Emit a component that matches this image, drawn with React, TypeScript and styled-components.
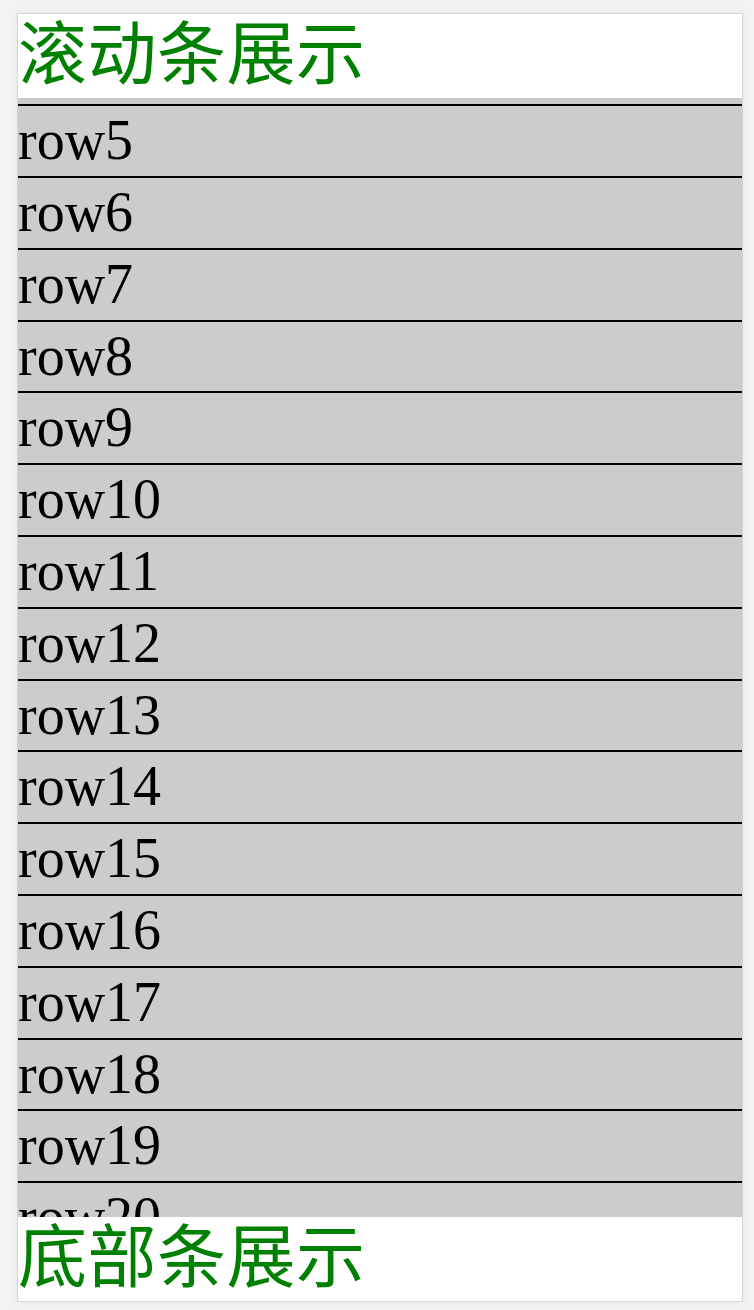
import { FC, useEffect, useRef } from 'react'

import styled, { createGlobalStyle } from 'styled-components'

const GlobalStyle = createGlobalStyle`
  html, body {
    margin: 0;
    padding: 0;
    background: #f3f3f3;
  }
  body {
    font-family: "Liberation Serif", "Noto Sans CJK SC", serif;
  }
`

const Page = styled.div`
  box-sizing: border-box;
  height: 1310px;
  padding: 13px 11px 8px 17px;
`

const Frame = styled.div`
  box-sizing: border-box;
  height: 100%;
  display: flex;
  flex-direction: column;
  background: #fff;
  border: 1px solid #d6d6d6;
  box-shadow: 0 0 8px rgba(0, 0, 0, 0.06);
`

const Bar = styled.div`
  flex: 0 0 84px;
  height: 84px;
  line-height: 84px;
  font-size: 69px;
  letter-spacing: 0.5px;
  color: #008000;
  background: #fff;
  white-space: nowrap;
  overflow: hidden;
`

const ScrollList = styled.ul`
  flex: 1;
  margin: 0;
  padding: 0;
  list-style: none;
  background: #ccc;
  overflow-y: auto;
  scrollbar-width: none;
  &::-webkit-scrollbar {
    display: none;
  }
`

const Row = styled.li`
  height: 69.8px;
  line-height: 69.8px;
  font-size: 56px;
  color: #000;
  border-bottom: 2px solid #000;
  white-space: nowrap;
`

const rows = Array.from({ length: 30 }, (_, i) => `row${i + 1}`)

const App: FC = () => {
  const listRef = useRef<HTMLUListElement>(null)

  // start scrolled so row5 sits at the top, like the screenshot
  useEffect(() => {
    if (listRef.current) listRef.current.scrollTop = 279
  }, [])

  return (
    <>
      <GlobalStyle />
      <Page>
        <Frame>
          <Bar>滚动条展示</Bar>
          <ScrollList ref={listRef}>
            {rows.map((r) => (
              <Row key={r}>{r}</Row>
            ))}
          </ScrollList>
          <Bar>底部条展示</Bar>
        </Frame>
      </Page>
    </>
  )
}

export default App
